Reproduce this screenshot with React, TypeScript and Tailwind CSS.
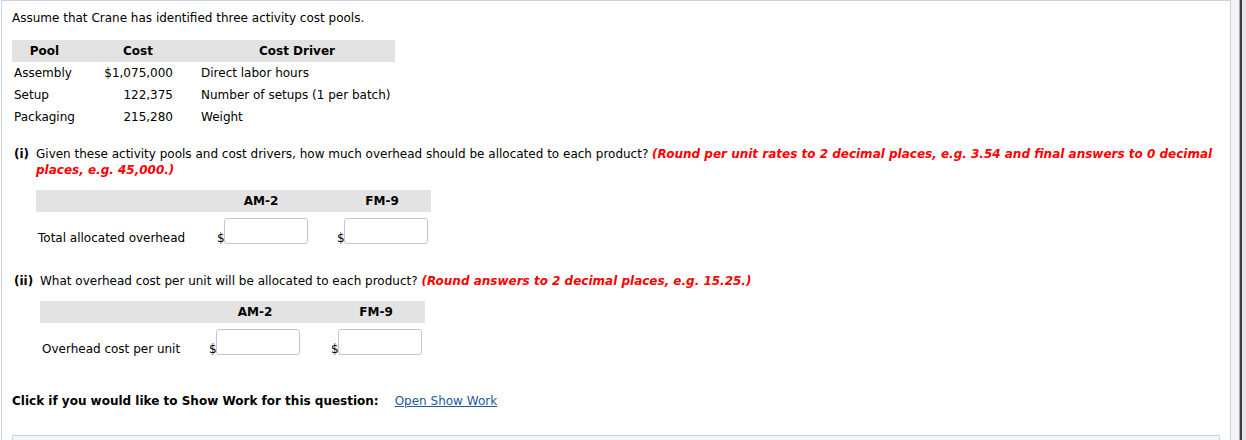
import React from 'react';

const FONT = 'font-["DejaVu_Sans","Verdana",sans-serif]';

function MoneyInput() {
  return (
    <div className="flex items-end">
      <span className="w-[7px] leading-4">$</span>
      <input
        type="text"
        className="w-[84px] h-[26px] mb-[2px] border border-[#c6c6c6] rounded-[3px] bg-white outline-none"
      />
    </div>
  );
}

export default function App() {
  const pools = [
    { name: 'Assembly', cost: '$1,075,000', driver: 'Direct labor hours' },
    { name: 'Setup', cost: '122,375', driver: 'Number of setups (1 per batch)' },
    { name: 'Packaging', cost: '215,280', driver: 'Weight' },
  ];

  return (
    <div className={`w-[1246px] h-[440px] overflow-hidden bg-white flex text-[12px] leading-4 text-black ${FONT}`}>
      {/* Main question panel */}
      <div className="ml-px w-[1230px] h-[460px] border-l border-t border-r border-[#c9d4df] pl-[10px] pt-[9px] shrink-0">
        <p>Assume that Crane has identified three activity cost pools.</p>

        {/* Pool table */}
        <div className="mt-[14px] w-[383px]">
          <div className="grid grid-cols-[65px_122px_196px] h-[22px] items-center bg-[#e3e3e3] font-bold">
            <div className="text-center">Pool</div>
            <div className="text-center">Cost</div>
            <div className="text-center">Cost Driver</div>
          </div>
          {pools.map(p => (
            <div key={p.name} className="grid grid-cols-[65px_122px_196px] h-[22px] items-center">
              <div className="pl-[2px] whitespace-nowrap">{p.name}</div>
              <div className="text-right pr-[26px]">{p.cost}</div>
              <div className="pl-[2px] whitespace-nowrap">{p.driver}</div>
            </div>
          ))}
        </div>

        {/* Part (i) */}
        <div className="mt-[18px] flex">
          <span className="w-[24px] pl-[2px] font-bold shrink-0">(i)</span>
          <p className="whitespace-nowrap">
            Given these activity pools and cost drivers, how much overhead should be allocated to each product?{' '}
            <span className="font-bold italic text-[#ff0000]">
              (Round per unit rates to 2 decimal places, e.g. 3.54 and final answers to 0 decimal
              <br />
              places, e.g. 45,000.)
            </span>
          </p>
        </div>

        <div className="mt-[12px] ml-[24px] w-[395px]">
          <div className="grid grid-cols-[177px_120px_98px] h-[22px] items-center bg-[#e3e3e3] font-bold">
            <div />
            <div className="w-[96px] text-center">AM-2</div>
            <div className="text-center">FM-9</div>
          </div>
          <div className="grid grid-cols-[177px_120px_98px] items-end mt-[6px]">
            <div className="pl-[2px] leading-4">Total allocated overhead</div>
            <div className="pl-[4px]"><MoneyInput /></div>
            <div className="pl-[4px]"><MoneyInput /></div>
          </div>
        </div>

        {/* Part (ii) */}
        <div className="mt-[27px] flex">
          <span className="w-[28px] pl-[2px] font-bold shrink-0">(ii)</span>
          <p className="whitespace-nowrap">
            What overhead cost per unit will be allocated to each product?{' '}
            <span className="font-bold italic text-[#ff0000]">(Round answers to 2 decimal places, e.g. 15.25.)</span>
          </p>
        </div>

        <div className="mt-[12px] ml-[28px] w-[385px]">
          <div className="grid grid-cols-[167px_120px_98px] h-[22px] items-center bg-[#e3e3e3] font-bold">
            <div />
            <div className="w-[96px] text-center">AM-2</div>
            <div className="text-center">FM-9</div>
          </div>
          <div className="grid grid-cols-[167px_120px_98px] items-end mt-[6px]">
            <div className="pl-[2px] leading-4">Overhead cost per unit</div>
            <div className="pl-[2px]"><MoneyInput /></div>
            <div className="pl-[4px]"><MoneyInput /></div>
          </div>
        </div>

        {/* Show work */}
        <div className="mt-[36px] flex items-center whitespace-nowrap">
          <span className="font-bold">Click if you would like to Show Work for this question:</span>
          <a href="#" className="ml-[16px] text-[#1d5a9b] underline">Open Show Work</a>
        </div>

        <div className="mt-[26px] w-[1208px] h-[40px] border border-[#c9d4df] bg-[#f4f7fa]" />
      </div>

      {/* Right gutter / scrollbar edge */}
      <div className="w-[8px] h-full bg-[#f3f6f9] shrink-0" />
      <div className="w-px h-full bg-[#a9a9a9] shrink-0" />
      <div className="w-[2px] h-full bg-[#3a3a3a] shrink-0" />
      <div className="flex-1 h-full bg-[#e4e4e4]" />
    </div>
  );
}
